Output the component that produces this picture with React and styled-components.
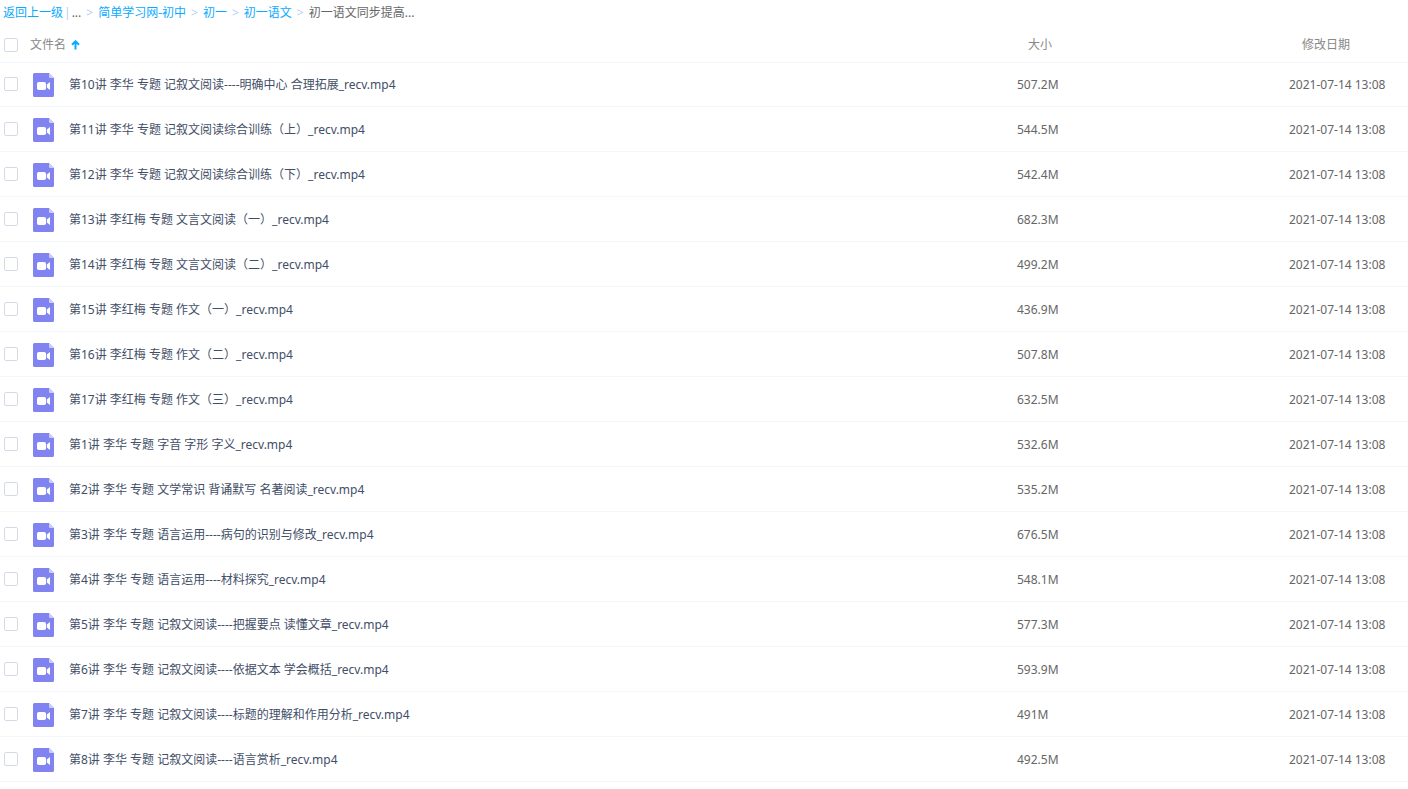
import { useState } from "react";
import styled, { createGlobalStyle } from "styled-components";

const GlobalStyle = createGlobalStyle`
  body {
    margin: 0;
    background: #fff;
    color: #424e67;
    font-family: "Noto Sans", "Noto Sans CJK SC", sans-serif;
    font-size: 12px;
    line-height: 16px;
  }
`;

const Breadcrumb = styled.nav`
  display: flex;
  align-items: center;
  gap: 5px;
  height: 26px;
  padding-left: 3px;
  color: #666;
  white-space: nowrap;
`;

const Crumb = styled.a`
  color: #09aaff;
  text-decoration: none;

  &:hover {
    text-decoration: underline;
  }
`;

const Separator = styled.span`
  color: #b4d0f5;
`;

const BackGroup = styled.span`
  display: flex;
  gap: 1px;
`;

const FileTable = styled.table`
  width: 100%;
  table-layout: fixed;
  border-collapse: separate;
  border-spacing: 0;
`;

const Col = styled.col`
  width: ${({ $width }) => $width};
`;

const HeadCell = styled.th`
  height: 36px;
  box-sizing: border-box;
  padding: 1px 0 0 ${({ $indent }) => $indent || "0"};
  color: #888;
  font-weight: 400;
  text-align: left;
`;

const SortButton = styled.button`
  display: flex;
  align-items: center;
  gap: 5px;
  padding: 0;
  border: 0;
  background: none;
  color: inherit;
  font: inherit;
  cursor: pointer;
`;

const Row = styled.tr`
  &:hover {
    background: #f4fbff;
  }
`;

const Cell = styled.td`
  height: 45px;
  box-sizing: border-box;
  padding: 1px 0 0;
  border-bottom: 1px solid #f2f6fd;
  color: ${({ $muted }) => ($muted ? "#666" : "inherit")};
  white-space: nowrap;

  ${Row}:first-child & {
    padding-top: 0;
    border-top: 1px solid #f2f6fd;
  }
`;

const CheckCell = styled(Cell)`
  padding: 0 0 1px;
`;

const Checkbox = styled.input.attrs({ type: "checkbox" })`
  appearance: none;
  display: block;
  box-sizing: border-box;
  width: 14px;
  height: 14px;
  margin: 0 0 0 4px;
  border: 1px solid #d5dbe6;
  border-radius: 2px;
  background: #fff;
  cursor: pointer;

  &:checked {
    border-color: #09aaff;
    background: #09aaff;
  }
`;

const FileName = styled.div`
  display: flex;
  align-items: center;
  gap: 15px;
  padding-left: 3px;
`;

const UpArrow = () => (
  <svg width="9" height="10" viewBox="0 0 9 10" aria-hidden="true">
    <path
      d="M4.5 9.5V1.5M1 4.8L4.5 1.3L8 4.8"
      fill="none"
      stroke="#09aaff"
      strokeWidth="2"
    />
  </svg>
);

const VideoIcon = () => (
  <svg width="21" height="24" viewBox="0 0 21 24" aria-hidden="true">
    <path
      d="M1.5 0H16L21 5V22.5a1.5 1.5 0 0 1-1.5 1.5H1.5A1.5 1.5 0 0 1 0 22.5V1.5A1.5 1.5 0 0 1 1.5 0Z"
      fill="#8183f1"
    />
    <path d="M16 0L21 5H17a1 1 0 0 1-1-1Z" fill="#cdcdfa" />
    <rect x="4" y="9" width="9" height="8" rx="1.8" fill="#fff" />
    <path d="M17 9V17L13.8 14.4V11.6Z" fill="#fff" />
  </svg>
);

const parents = ["简单学习网-初中", "初一", "初一语文"];

const files = [
  { name: "第10讲 李华 专题 记叙文阅读----明确中心 合理拓展_recv.mp4", size: "507.2M" },
  { name: "第11讲 李华 专题 记叙文阅读综合训练（上）_recv.mp4", size: "544.5M" },
  { name: "第12讲 李华 专题 记叙文阅读综合训练（下）_recv.mp4", size: "542.4M" },
  { name: "第13讲 李红梅 专题 文言文阅读（一）_recv.mp4", size: "682.3M" },
  { name: "第14讲 李红梅 专题 文言文阅读（二）_recv.mp4", size: "499.2M" },
  { name: "第15讲 李红梅 专题 作文（一）_recv.mp4", size: "436.9M" },
  { name: "第16讲 李红梅 专题 作文（二）_recv.mp4", size: "507.8M" },
  { name: "第17讲 李红梅 专题 作文（三）_recv.mp4", size: "632.5M" },
  { name: "第1讲 李华 专题 字音 字形 字义_recv.mp4", size: "532.6M" },
  { name: "第2讲 李华 专题 文学常识 背诵默写 名著阅读_recv.mp4", size: "535.2M" },
  { name: "第3讲 李华 专题 语言运用----病句的识别与修改_recv.mp4", size: "676.5M" },
  { name: "第4讲 李华 专题 语言运用----材料探究_recv.mp4", size: "548.1M" },
  { name: "第5讲 李华 专题 记叙文阅读----把握要点 读懂文章_recv.mp4", size: "577.3M" },
  { name: "第6讲 李华 专题 记叙文阅读----依据文本 学会概括_recv.mp4", size: "593.9M" },
  { name: "第7讲 李华 专题 记叙文阅读----标题的理解和作用分析_recv.mp4", size: "491M" },
  { name: "第8讲 李华 专题 记叙文阅读----语言赏析_recv.mp4", size: "492.5M" },
];

const modified = "2021-07-14 13:08";

const App = () => {
  const [selected, setSelected] = useState([]);

  const toggle = (name) => {
    setSelected((prev) =>
      prev.includes(name) ? prev.filter((n) => n !== name) : [...prev, name]
    );
  };

  const toggleAll = (e) => {
    setSelected(e.target.checked ? files.map((f) => f.name) : []);
  };

  return (
    <>
      <GlobalStyle />
      <Breadcrumb>
        <BackGroup>
          <Crumb href="#">返回上一级</Crumb>
          <Separator>|</Separator>
          <span>...</span>
        </BackGroup>
        <Separator>&gt;</Separator>
        {parents.map((dir) => [
          <Crumb key={dir} href="#">
            {dir}
          </Crumb>,
          <Separator key={`${dir}-sep`}>&gt;</Separator>,
        ])}
        <span>初一语文同步提高...</span>
      </Breadcrumb>

      <FileTable>
        <colgroup>
          <Col $width="30px" />
          <Col />
          <Col $width="272px" />
          <Col $width="119px" />
        </colgroup>
        <thead>
          <tr>
            <HeadCell>
              <Checkbox
                aria-label="全选"
                checked={selected.length === files.length}
                onChange={toggleAll}
              />
            </HeadCell>
            <HeadCell aria-sort="ascending">
              <SortButton type="button">
                文件名
                <UpArrow />
              </SortButton>
            </HeadCell>
            <HeadCell $indent="11px">大小</HeadCell>
            <HeadCell $indent="13px">修改日期</HeadCell>
          </tr>
        </thead>
        <tbody>
          {files.map((file, i) => (
            <Row key={file.name}>
              <CheckCell>
                <Checkbox
                  id={`file-${i}`}
                  checked={selected.includes(file.name)}
                  onChange={() => toggle(file.name)}
                />
              </CheckCell>
              <Cell>
                <FileName>
                  <VideoIcon />
                  <label htmlFor={`file-${i}`}>{file.name}</label>
                </FileName>
              </Cell>
              <Cell $muted>{file.size}</Cell>
              <Cell $muted>{modified}</Cell>
            </Row>
          ))}
        </tbody>
      </FileTable>
    </>
  );
};

export default App;
